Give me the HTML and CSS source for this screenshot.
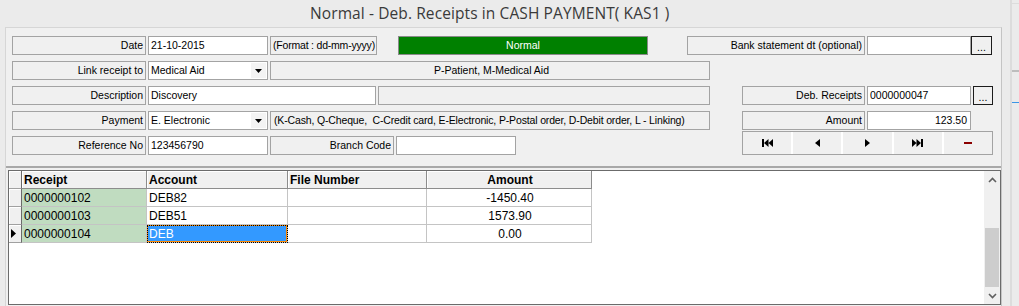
FILE: index.html
```html
<!DOCTYPE html>
<html lang="en">
<head>
  <meta charset="UTF-8" />
  <title>Deb. Receipts in CASH PAYMENT</title>
  <link rel="stylesheet" href="styles.css">
</head>
<body>
<div class="screen">
  <div class="main">
    <div class="title">Normal - Deb. Receipts in CASH PAYMENT( KAS1 )</div>

    <div class="window">
      <div class="form">
        <div class="row">
          <div class="lbl">Date</div>
          <div class="fld">21-10-2015</div>
          <div class="note fmt">(Format : dd-mm-yyyy)</div>
          <div class="status">Normal</div>
          <div class="lbl bank">Bank statement dt (optional)</div>
          <div class="fld fld-side"></div>
          <div class="dots dots-tight">...</div>
        </div>

        <div class="row">
          <div class="lbl">Link receipt to</div>
          <div class="fld combo">Medical Aid<span class="drop"><svg width="7" height="4" viewBox="0 0 7 4"><path d="M0 0h7L3.5 4z" fill="#000"/></svg></span></div>
          <div class="note hint center">P-Patient, M-Medical Aid</div>
        </div>

        <div class="row">
          <div class="lbl">Description</div>
          <div class="fld fld-wide">Discovery</div>
          <div class="note desc2"></div>
          <div class="lbl rlbl">Deb. Receipts</div>
          <div class="fld fld-side">0000000047</div>
          <div class="dots">...</div>
        </div>

        <div class="row">
          <div class="lbl">Payment</div>
          <div class="fld combo">E. Electronic<span class="drop"><svg width="7" height="4" viewBox="0 0 7 4"><path d="M0 0h7L3.5 4z" fill="#000"/></svg></span></div>
          <div class="note hint tight">(K-Cash, Q-Cheque,&nbsp; C-Credit card, E-Electronic, P-Postal order, D-Debit order, L - Linking)</div>
          <div class="lbl rlbl">Amount</div>
          <div class="fld fld-side num">123.50</div>
        </div>

        <div class="row">
          <div class="lbl">Reference No</div>
          <div class="fld">123456790</div>
          <div class="lbl branch">Branch Code</div>
          <div class="fld"></div>
          <div class="nav">
            <div class="nav-btn"><svg width="11" height="8" viewBox="0 0 11 8"><path d="M0 0h2v8H0zM2 4l4.5-4v8zM6.5 4L11 0v8z" fill="#000"/></svg></div>
            <div class="nav-btn"><svg width="5" height="8" viewBox="0 0 5 8"><path d="M0 4l5-4v8z" fill="#000"/></svg></div>
            <div class="nav-btn"><svg width="5" height="8" viewBox="0 0 5 8"><path d="M5 4L0 0v8z" fill="#000"/></svg></div>
            <div class="nav-btn"><svg width="11" height="8" viewBox="0 0 11 8"><path d="M11 0H9v8h2zM9 4L4.5 0v8zM4.5 4L0 0v8z" fill="#000"/></svg></div>
            <div class="nav-btn"><span class="minus"></span></div>
          </div>
        </div>
      </div>

      <div class="grid-area">
        <div class="grid">
          <div class="grid-body">
            <table>
              <colgroup>
                <col class="c-ind"><col class="c-rec"><col class="c-acc"><col class="c-file"><col class="c-amt">
              </colgroup>
              <thead>
                <tr><th class="ind"></th><th>Receipt</th><th>Account</th><th>File Number</th><th class="center">Amount</th></tr>
              </thead>
              <tbody>
                <tr><td class="ind"></td><td class="rec">0000000102</td><td>DEB82</td><td></td><td class="center">-1450.40</td></tr>
                <tr><td class="ind"></td><td class="rec">0000000103</td><td>DEB51</td><td></td><td class="center">1573.90</td></tr>
                <tr><td class="ind cur"><svg width="5" height="9" viewBox="0 0 5 9"><path d="M0 0l5 4.5L0 9z" fill="#000"/></svg></td><td class="rec">0000000104</td><td class="sel">DEB</td><td></td><td class="center">0.00</td></tr>
              </tbody>
            </table>
          </div>
          <div class="vscroll">
            <div class="sb-arrow"><svg width="9" height="6" viewBox="0 0 9 6"><path d="M1 5l3.5-3.5L8 5" fill="none" stroke="#606060" stroke-width="1.6"/></svg></div>
            <div class="sb-track"><div class="sb-thumb"></div></div>
            <div class="sb-arrow"><svg width="9" height="6" viewBox="0 0 9 6"><path d="M1 1l3.5 3.5L8 1" fill="none" stroke="#606060" stroke-width="1.6"/></svg></div>
          </div>
        </div>
      </div>
    </div>
  </div>

  <div class="side">
    <div class="strip">
      <div class="strip-top"></div>
      <div class="strip-line"></div>
      <div class="strip-blue"></div>
    </div>
  </div>
</div>
</body>
</html>
```

FILE: styles.css
```css
* {
  box-sizing: border-box;
}
body {
  margin: 0;
  background: #ebebeb;
  font-family: "Liberation Sans", Arial, sans-serif;
  font-size: 10.5px;
  color: #000;
}
.screen {
  display: flex;
  width: 1019px;
  height: 306px;
  overflow: hidden;
}
.main {
  width: 1002px;
}
.title {
  height: 27px;
  line-height: 26px;
  padding-left: 310px;
  font-family: "Open Sans", "Noto Sans", sans-serif;
  font-size: 15.5px;
  letter-spacing: 0.1px;
  color: #3a3a3a;
}
.window {
  width: 997px;
  height: 279px;
  margin-left: 5px;
  background: #f0f0f0;
  border-top: 1px solid #d6d6d6;
  border-left: 1px solid #d6d6d6;
  border-right: 1px solid #c4c4c4;
}

/* form */
.form {
  display: flex;
  flex-direction: column;
  gap: 6px;
  padding: 8px 0 0 6px;
}
.row {
  display: flex;
  gap: 2px;
  height: 19px;
}
.lbl, .fld, .note, .status, .dots {
  height: 19px;
  line-height: 17px;
  border: 1px solid #a3a3a3;
  white-space: nowrap;
  overflow: hidden;
}
.lbl {
  width: 134px;
  text-align: right;
  padding-right: 2px;
  background: #f0f0f0;
}
.fld {
  width: 120px;
  background: #fff;
  padding-left: 2px;
}
.fld-wide {
  width: 228px;
}
.fld-side {
  width: 104px;
}
.num {
  text-align: right;
  padding-right: 3px;
}
.combo {
  display: flex;
  justify-content: space-between;
  padding-right: 1px;
}
.drop {
  width: 15px;
  height: 15px;
  margin-top: 1px;
  background: #f3f3f3;
  display: flex;
  align-items: center;
  justify-content: center;
}
.note {
  background: #f0f0f0;
  padding-left: 3px;
}
.fmt {
  width: 107px;
  padding-left: 2px;
  letter-spacing: -0.2px;
}
.hint {
  width: 440px;
}
.tight {
  letter-spacing: -0.15px;
}
.center {
  text-align: center;
}
.desc2 {
  width: 332px;
}
.status {
  width: 250px;
  margin-left: 19px;
  background: #008000;
  color: #fff;
  text-align: center;
  border-color: #8a8a8a;
}
.bank {
  width: 178px;
  margin-left: 37px;
}
.rlbl {
  width: 123px;
  margin-left: 30px;
}
.branch {
  width: 124px;
}
.dots {
  width: 20px;
  border-color: #1c1c1c;
  background: #f0f0f0;
  text-align: center;
  line-height: 20px;
}
.dots-tight {
  margin-left: -2px;
  width: 21px;
}
.nav {
  width: 251px;
  height: 24px;
  margin-top: -5px;
  margin-left: 224px;
  border: 1px solid #a3a3a3;
  background: #fff;
  display: grid;
  grid-template-columns: repeat(5, 1fr);
  gap: 2px;
}
.nav-btn {
  background: #f0f0f0;
  display: flex;
  align-items: center;
  justify-content: center;
}
.minus {
  width: 8px;
  height: 2px;
  background: #8b0000;
}

/* grid */
.grid-area {
  margin-top: 11px;
  border-top: 2px solid #a8a8a8;
  padding: 2px 0 0 2px;
}
.grid {
  width: 993px;
  height: 135px;
  border: 1px solid #6b6b6b;
  background: #fff;
  display: flex;
}
.grid-body {
  flex: 1;
}
table {
  table-layout: fixed;
  border-collapse: separate;
  border-spacing: 0;
  width: 583px;
  font-size: 12px;
}
.c-ind { width: 13px; }
.c-rec { width: 125px; }
.c-acc { width: 141px; }
.c-file { width: 139px; }
.c-amt { width: 165px; }
th, td {
  height: 18px;
  padding: 0 0 0 2px;
  white-space: nowrap;
  overflow: hidden;
}
th {
  background: #f0f0f0;
  font-weight: bold;
  text-align: left;
  height: 18px;
  border-right: 1px solid #8c8c8c;
  border-bottom: 1px solid #8c8c8c;
  box-shadow: inset 1px 1px 0 #fff;
}
td {
  border-right: 1px solid #c4c4c4;
  border-bottom: 1px solid #c4c4c4;
}
td.ind, th.ind {
  padding: 0;
  background: #f0f0f0;
  border-right: 1px solid #6b6b6b;
  border-bottom: 1px solid #a0a0a0;
  box-shadow: inset 1px 1px 0 #fff;
}
td.cur {
  padding-left: 2px;
  line-height: 0;
}
.rec {
  background: #c0dcc0;
}
.sel {
  background: #3399ff;
  color: #fff;
  outline: 1px dotted #000;
  outline-offset: -1px;
  box-shadow: inset 0 0 0 1px #ff8a00;
}
.vscroll {
  width: 16px;
  background: #f0f0f0;
  display: flex;
  flex-direction: column;
}
.sb-arrow {
  height: 17px;
  display: flex;
  align-items: center;
  justify-content: center;
}
.sb-track {
  flex: 1;
  display: flex;
  flex-direction: column;
  justify-content: flex-end;
}
.sb-thumb {
  height: 59px;
  margin: 0 1px;
  background: #cdcdcd;
}

/* background strip on the right */
.side {
  flex: 1;
  padding-left: 8px;
}
.strip {
  height: 100%;
  border-left: 2px solid #dcdcdc;
  padding-top: 3px;
}
.strip-top {
  height: 1px;
  background: #dcdcdc;
}
.strip-line {
  height: 2px;
  margin-top: 66px;
  background: #bdbdbd;
}
.strip-blue {
  height: 1px;
  margin-top: 30px;
  background: #3c96e6;
}
```
